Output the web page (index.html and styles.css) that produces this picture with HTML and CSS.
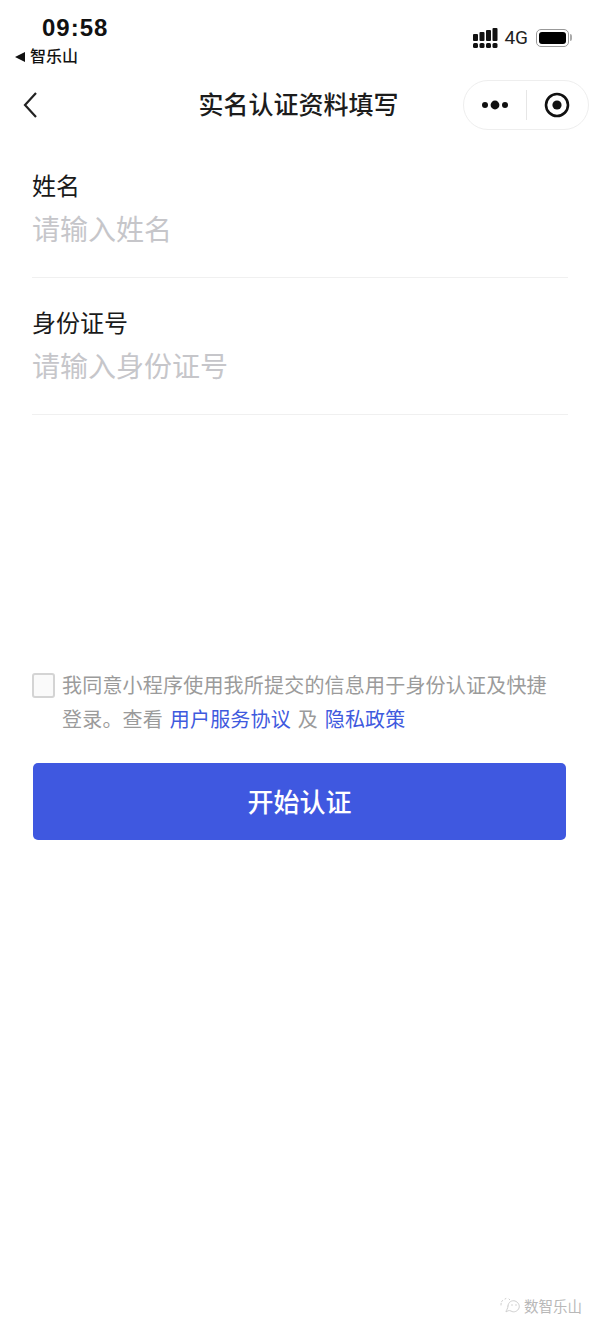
FILE: index.html
```html
<!DOCTYPE html>
<html lang="zh-CN">
<head>
    <meta charset="UTF-8">
    <meta name="viewport" content="width=device-width, initial-scale=1.0">
    <title>实名认证资料填写</title>
    <link rel="stylesheet" href="styles.css">
</head>
<body>
    <div class="phone">
        <div class="status-bar">
            <div class="status-left">
                <div class="time">09:58</div>
                <div class="back-app"><span class="back-arrow"></span>智乐山</div>
            </div>
            <div class="status-right">
                <svg class="signal" width="25" height="20" viewBox="0 0 25 20">
                    <g fill="#111">
                        <rect x="0" y="6" width="5" height="7" rx="1"/>
                        <rect x="6.5" y="4" width="5" height="9" rx="1"/>
                        <rect x="13" y="2" width="5" height="11" rx="1"/>
                        <rect x="19.5" y="0" width="5" height="13" rx="1"/>
                        <rect x="0" y="15" width="5" height="5" rx="1.5"/>
                        <rect x="6.5" y="15" width="5" height="5" rx="1.5"/>
                        <rect x="13" y="15" width="5" height="5" rx="1.5"/>
                        <rect x="19.5" y="15" width="5" height="5" rx="1.5"/>
                    </g>
                </svg>
                <span class="network">4G</span>
                <div class="battery"><div class="battery-level"></div></div>
                <div class="battery-tip"></div>
            </div>
        </div>

        <div class="nav-bar">
            <svg class="nav-back" width="16" height="28" viewBox="0 0 16 28">
                <path d="M14 2 L3 14 L14 26" fill="none" stroke="#222" stroke-width="2.2"/>
            </svg>
            <div class="nav-title">实名认证资料填写</div>
            <div class="capsule">
                <div class="capsule-btn">
                    <svg width="30" height="12" viewBox="0 0 30 12">
                        <circle cx="5" cy="6" r="3" fill="#111"/>
                        <circle cx="15" cy="6" r="4.4" fill="#111"/>
                        <circle cx="25" cy="6" r="3" fill="#111"/>
                    </svg>
                </div>
                <div class="capsule-line"></div>
                <div class="capsule-btn">
                    <svg width="26" height="26" viewBox="0 0 26 26">
                        <circle cx="13" cy="13" r="11" fill="none" stroke="#111" stroke-width="2.6"/>
                        <circle cx="13" cy="13" r="4.6" fill="#111"/>
                    </svg>
                </div>
            </div>
        </div>

        <div class="form">
            <div class="field">
                <div class="field-label">姓名</div>
                <div class="field-input">请输入姓名</div>
            </div>
            <div class="field">
                <div class="field-label">身份证号</div>
                <div class="field-input">请输入身份证号</div>
            </div>
        </div>

        <div class="agree">
            <div class="checkbox"></div>
            <div class="agree-text">我同意小程序使用我所提交的信息用于身份认证及快捷<br>登录。查看 <span class="link">用户服务协议</span> 及 <span class="link">隐私政策</span></div>
        </div>
        <div class="submit">开始认证</div>

        <div class="watermark">
            <svg width="22" height="18" viewBox="0 0 22 18">
                <g fill="none" stroke="#cfcfcf" stroke-width="1" stroke-linecap="round">
                    <path d="M1 8 C1 5 2 4 3 3" stroke-dasharray="1.5 2"/>
                    <path d="M5 2 L7 1 M9 2 L10 3" stroke-dasharray="1 2"/>
                    <path d="M8 9 C8 5 12 3 15 4 C18 5 20 8 19 11 C18 14 14 16 11 14 C9 13 7 14 6 15 C6 13 8 12 8 9"/>
                </g>
                <circle cx="12" cy="8" r="0.8" fill="#cfcfcf"/>
                <circle cx="16" cy="8" r="0.8" fill="#cfcfcf"/>
            </svg>
            <span>数智乐山</span>
        </div>
    </div>
</body>
</html>
```

FILE: styles.css
```css
* {
    box-sizing: border-box;
}
body {
    margin: 0;
    background-color: #fff;
    font-family: "Liberation Sans", "Noto Sans CJK SC", sans-serif;
    color: #111;
}
.phone {
    position: relative;
    width: 600px;
    height: 1332px;
    overflow: hidden;
    background-color: #fff;
}
.status-bar {
    display: flex;
    justify-content: space-between;
    height: 80px;
    padding: 14px 28px 0 14px;
}
.time {
    margin-left: 28px;
    font-size: 24px;
    font-weight: bold;
    line-height: 28px;
    letter-spacing: 1px;
}
.back-app {
    display: flex;
    align-items: center;
    margin-top: 3px;
    font-size: 16px;
    font-weight: 500;
    line-height: 24px;
}
.back-arrow {
    width: 0;
    height: 0;
    margin: 0 5px 0 1px;
    border-top: 5px solid transparent;
    border-bottom: 5px solid transparent;
    border-right: 10px solid #111;
}
.status-right {
    display: flex;
    align-items: flex-start;
    padding-top: 14px;
}
.network {
    margin: 0 8px 0 6px;
    font-family: Roboto, sans-serif;
    font-size: 19px;
    line-height: 20px;
    color: #222;
}
.battery {
    width: 33px;
    height: 18px;
    margin-top: 1px;
    padding: 2px;
    border: 1px solid #999;
    border-radius: 5px;
}
.battery-level {
    width: 100%;
    height: 100%;
    background-color: #000;
    border-radius: 3px;
}
.battery-tip {
    width: 2px;
    height: 7px;
    margin: 6px 0 0 1px;
    background-color: #aaa;
    border-radius: 0 2px 2px 0;
}
.nav-bar {
    position: relative;
    display: flex;
    align-items: center;
    justify-content: center;
    height: 50px;
}
.nav-back {
    position: absolute;
    left: 22px;
    top: 11px;
}
.nav-title {
    margin-right: 3px;
    font-size: 25px;
    font-weight: 500;
    line-height: 50px;
    color: #1c1c1c;
}
.capsule {
    position: absolute;
    right: 11px;
    top: 0;
    display: flex;
    align-items: center;
    width: 126px;
    height: 50px;
    border: 1px solid #eee;
    border-radius: 25px;
}
.capsule-btn {
    display: flex;
    flex: 1;
    align-items: center;
    justify-content: center;
}
.capsule-line {
    width: 1px;
    height: 30px;
    background-color: #e6e6e6;
}
.form {
    padding: 11px 32px 0;
}
.field {
    height: 137px;
    padding-top: 30px;
    border-bottom: 1px solid #f0f0f0;
}
.field-label {
    font-size: 24px;
    line-height: 32px;
    color: #1a1a1a;
}
.field-input {
    margin-top: 8px;
    font-size: 28px;
    line-height: 40px;
    color: #c6c6ca;
}
.agree {
    display: flex;
    margin: 254px 32px 0;
}
.checkbox {
    flex: none;
    width: 23px;
    height: 25px;
    margin: 4px 8px 0 0;
    background-color: #fafafa;
    border: 2px solid #d4d4d4;
    border-radius: 3px;
}
.agree-text {
    margin-left: -1px;
    font-size: 20px;
    line-height: 34px;
    letter-spacing: 0.2px;
    word-spacing: 1px;
    color: #9b9b9b;
    white-space: nowrap;
}
.link {
    color: #3f5ade;
}
.submit {
    display: flex;
    align-items: center;
    justify-content: center;
    height: 77px;
    margin: 26px 34px 0 33px;
    padding-bottom: 2px;
    background-color: #3f58e0;
    border-radius: 5px;
    color: #fff;
    font-size: 26px;
    font-weight: 500;
}
.watermark {
    position: absolute;
    right: 18px;
    bottom: 16px;
    display: flex;
    align-items: center;
    gap: 2px;
    font-size: 14.5px;
    color: #b8b8b8;
}
```
